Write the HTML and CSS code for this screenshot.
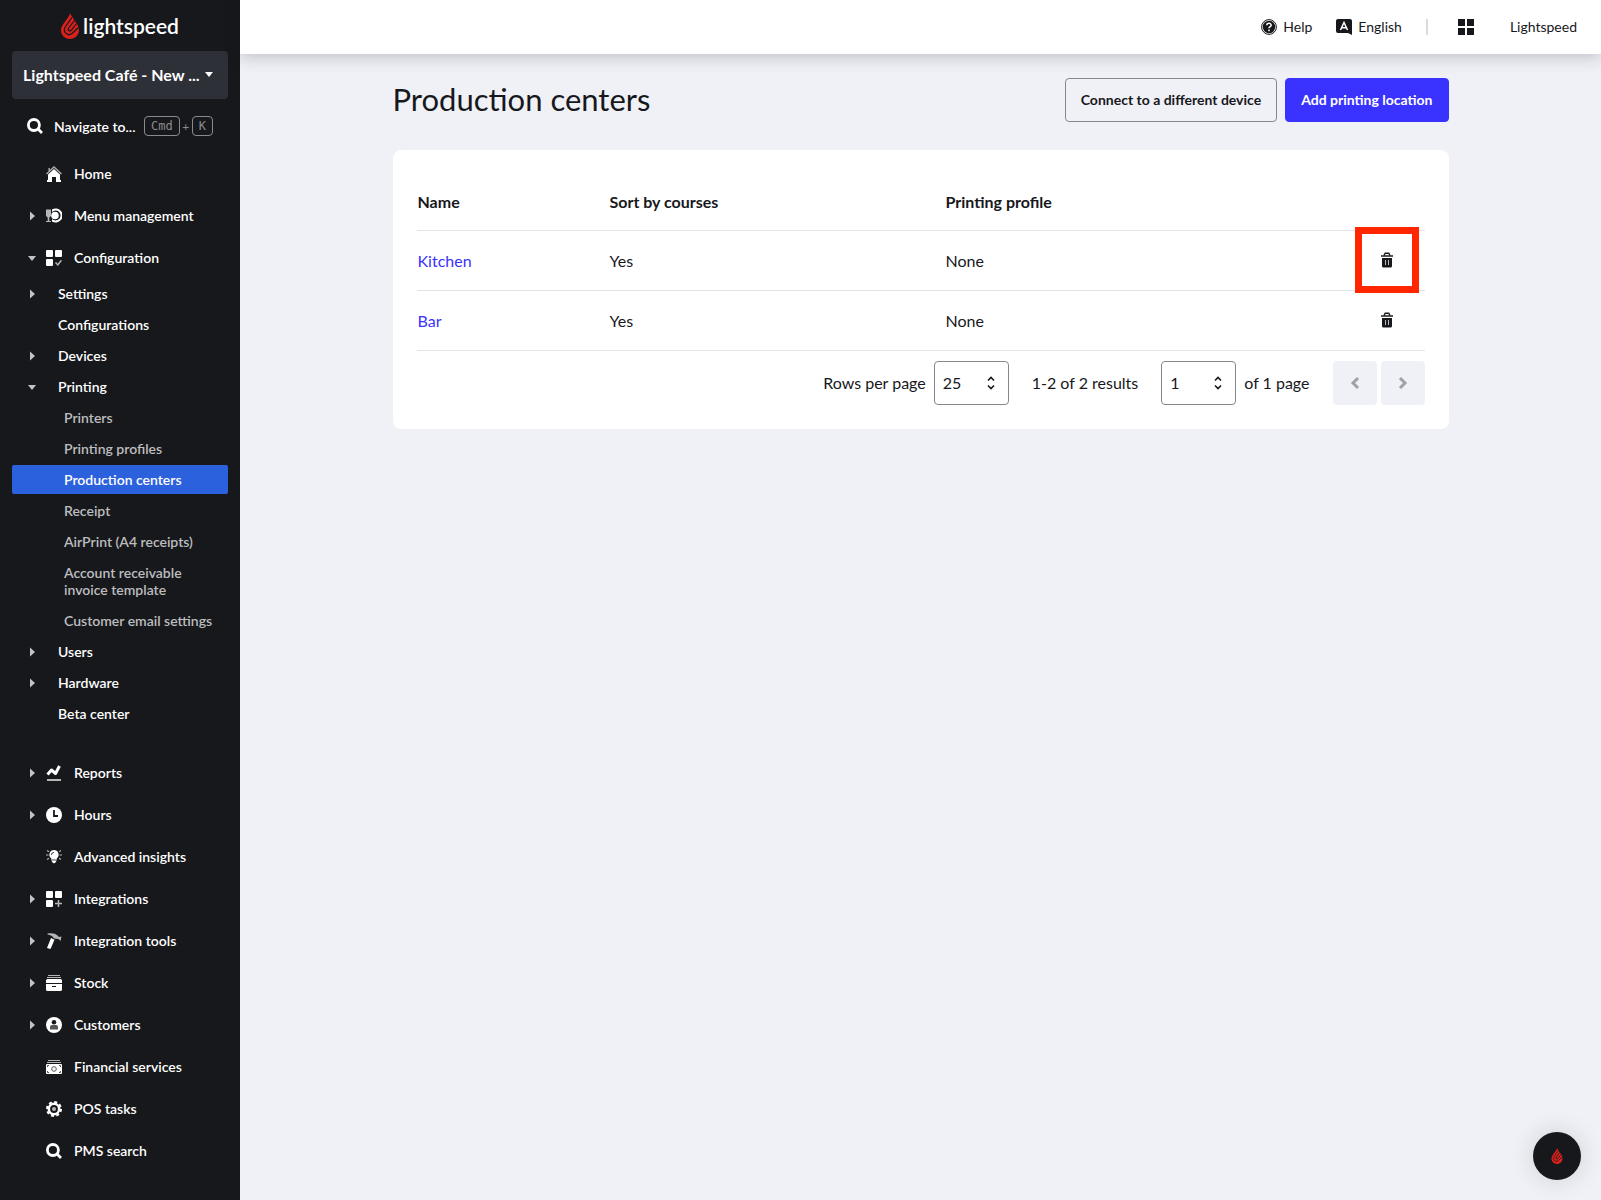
FILE: index.html
```html
<!DOCTYPE html>
<html lang="en">
<head>
    <meta charset="UTF-8">
    <meta name="viewport" content="width=device-width, initial-scale=1.0">
    <title>Production centers</title>
    <link rel="stylesheet" href="styles.css">
</head>
<body>
    <!-- shared shapes -->
    <svg class="defs" aria-hidden="true">
        <symbol id="right" viewBox="0 0 12 12"><path d="M4 1.500v9L9 6z"/></symbol>
        <symbol id="down" viewBox="0 0 12 12"><path d="M2 4h8L6 9z"/></symbol>
        <symbol id="flame" viewBox="0 0 18 26">
            <path fill="#d8211d" d="M9.500 0C9.500 3 12.500 4.500 13 7C15.500 10 18 13 18 17C18 22 14 26 9 26C4 26 0 22 0 17.500C0 13 3.500 9.500 6 6C7.500 4 8.500 2 9.500 0z"/>
            <path fill="none" stroke="#17181c" stroke-width="1.200" d="M11 4.500L4.500 13.500C1 18.500 6.500 24 11 20.500L17.500 14.500M13.500 7.500L8 14.500C6 17.500 8.500 19 10.500 17L15.500 10.500"/>
        </symbol>
        <symbol id="search" viewBox="0 0 16 16"><path fill="none" stroke="currentColor" stroke-width="2.800" d="M12.400 7a5.500 5.500 0 1 1-11 0a5.500 5.500 0 0 1 11 0zM10.800 10.800L15 15"/></symbol>
        <symbol id="trash" viewBox="0 0 12 16">
            <path d="M1 6h10v8a1.500 1.500 0 0 1-1.500 1.500h-7A1.500 1.500 0 0 1 1 14z"/>
            <path fill="#555" d="M0 3h12v2H0z"/>
            <path fill="none" stroke="currentColor" stroke-width="1.400" d="M3 3.500L4.200 1.200h3.600L9 3.500"/>
            <path fill="#bbb" d="M4 8h1v5H4zM7 8h1v5H7z"/>
        </symbol>
        <symbol id="updown" viewBox="0 0 10 14"><path fill="none" stroke="currentColor" stroke-width="1.600" d="M2 4.500l3-3l3 3M2 9.500l3 3l3-3"/></symbol>
    </svg>

    <div class="app">
        <aside class="sidebar">
            <a class="logo" href="#"><svg class="flame"><use href="#flame"/></svg>lightspeed</a>
            <button class="store" type="button"><span>Lightspeed Café - New ...</span><svg class="arrow"><use href="#down"/></svg></button>
            <button class="navigate" type="button">
                <svg class="icon"><use href="#search"/></svg>
                <span class="navigate-text">Navigate to...</span>
                <kbd>Cmd</kbd><span class="plus">+</span><kbd>K</kbd>
            </button>

            <nav>
                <a class="item" href="#">
                    <span class="arrow"></span>
                    <svg class="icon" viewBox="0 0 16 16"><path fill="none" stroke="#aaa" stroke-width="1.500" d="M.5 8L8 1l7.500 7M3.200 5V2"/><path d="M8 3l6 5.500V14h1v2h-5v-5H6v5H1v-2h1V8.500z"/></svg>
                    Home
                </a>
                <a class="item" href="#">
                    <svg class="arrow"><use href="#right"/></svg>
                    <svg class="icon" viewBox="0 0 16 16"><path fill="#b5b5b5" d="M0 1.500h5V8L3.300 9.500v3.500H5v1H0v-1h1.700V9.500L0 8z"/><path d="M6 1.500A7 7 0 1 1 6 13.500V11a5 5 0 1 0 0-7z"/><circle cx="9" cy="7.500" r="3.800"/></svg>
                    Menu management
                </a>
                <a class="item" href="#">
                    <svg class="arrow"><use href="#down"/></svg>
                    <svg class="icon" viewBox="0 0 16 16"><rect width="7" height="7" rx="1"/><rect x="9" width="7" height="7" rx="1"/><rect y="9" width="7" height="7" rx="1"/><path fill="none" stroke="#b5b5b5" stroke-width="1.500" d="M9.500 12.500l2.300 2.300l3.700-4.500"/></svg>
                    Configuration
                </a>

                <div class="submenu">
                    <a class="sub" href="#"><svg class="arrow"><use href="#right"/></svg>Settings</a>
                    <a class="sub" href="#"><span class="arrow"></span>Configurations</a>
                    <a class="sub" href="#"><svg class="arrow"><use href="#right"/></svg>Devices</a>
                    <a class="sub" href="#"><svg class="arrow"><use href="#down"/></svg>Printing</a>
                    <a class="leaf" href="#">Printers</a>
                    <a class="leaf" href="#">Printing profiles</a>
                    <a class="leaf active" href="#">Production centers</a>
                    <a class="leaf" href="#">Receipt</a>
                    <a class="leaf" href="#">AirPrint (A4 receipts)</a>
                    <a class="leaf" href="#">Account receivable<br>invoice template</a>
                    <a class="leaf" href="#">Customer email settings</a>
                    <a class="sub" href="#"><svg class="arrow"><use href="#right"/></svg>Users</a>
                    <a class="sub" href="#"><svg class="arrow"><use href="#right"/></svg>Hardware</a>
                    <a class="sub" href="#"><span class="arrow"></span>Beta center</a>
                </div>

                <a class="item" href="#">
                    <svg class="arrow"><use href="#right"/></svg>
                    <svg class="icon" viewBox="0 0 16 16"><path fill="#b5b5b5" d="M1 14h14v2H1z"/><path fill="none" stroke="currentColor" stroke-width="3" stroke-linejoin="round" d="M1.500 9.500L5.500 5l4 3.500L13.500 1"/></svg>
                    Reports
                </a>
                <a class="item" href="#">
                    <svg class="arrow"><use href="#right"/></svg>
                    <svg class="icon" viewBox="0 0 16 16"><circle cx="8" cy="8" r="8"/><path fill="none" stroke="#17181c" stroke-width="1.800" d="M8 3v6h4"/></svg>
                    Hours
                </a>
                <a class="item" href="#">
                    <span class="arrow"></span>
                    <svg class="icon" viewBox="0 0 16 16"><path fill="none" stroke="#b5b5b5" stroke-width="1.200" d="M0 6h2.500M16 6h-2.500M1 1.500l2 1.200M15 1.500l-2 1.200M1 10.500l2-1.200M15 10.500l-2-1.200"/><path d="M8 1a4.700 4.700 0 0 1 2.800 8.400L10 13l-2 1.500L6 13l-.8-3.600A4.700 4.700 0 0 1 8 1z"/><path fill="none" stroke="#17181c" stroke-width=".8" d="M5.500 6A2.500 2.500 0 0 1 8 3.300M6 11h4"/></svg>
                    Advanced insights
                </a>
                <a class="item" href="#">
                    <svg class="arrow"><use href="#right"/></svg>
                    <svg class="icon" viewBox="0 0 16 16"><rect width="7" height="7" rx="1"/><rect x="9" width="7" height="7" rx="1"/><rect y="9" width="7" height="7" rx="1"/><path fill="none" stroke="#b5b5b5" stroke-width="1.500" d="M9 12.500h7M12.500 9v7"/></svg>
                    Integrations
                </a>
                <a class="item" href="#">
                    <svg class="arrow"><use href="#right"/></svg>
                    <svg class="icon" viewBox="0 0 16 16"><path fill="#b5b5b5" d="M1.500.5C6-.3 9 .2 11.500 2.500L13 4l2.500-.5L14.500 8l-2-2L8 5.500C7 3 4.500 2 1.500 1.500z"/><path d="M5 5l3.500 1.700L4.500 16L1 15z"/></svg>
                    Integration tools
                </a>
                <a class="item" href="#">
                    <svg class="arrow"><use href="#right"/></svg>
                    <svg class="icon" viewBox="0 0 16 16"><path fill="#b5b5b5" d="M2 0h12v1H2zM1 2h14v1H1z"/><path d="M0 5.500Q0 4 1.500 4h13Q16 4 16 5.500V8H0zM0 9h16v5.500q0 1.500-1.500 1.500h-13Q0 16 0 14.500z"/><path fill="#17181c" d="M6 11h4v1H6z"/></svg>
                    Stock
                </a>
                <a class="item" href="#">
                    <svg class="arrow"><use href="#right"/></svg>
                    <svg class="icon" viewBox="0 0 16 16"><circle cx="8" cy="8" r="8"/><circle cx="8" cy="5.300" r="2.300" fill="#17181c"/><path fill="#555" d="M4 12.500V10q0-2 2-2h4q2 0 2 2v2.500z"/></svg>
                    Customers
                </a>
                <a class="item" href="#">
                    <span class="arrow"></span>
                    <svg class="icon" viewBox="0 0 16 16"><path fill="#b5b5b5" d="M2 1h12v1H2zM1 3h14v1H1z"/><rect y="5" width="16" height="10" rx="1"/><g fill="none" stroke="#555"><circle cx="8" cy="10" r="2.300"/><path d="M1.500 8V6.500H3M13 6.500h1.500V8M1.500 12v1.500H3M13 13.500h1.500V12"/></g></svg>
                    Financial services
                </a>
                <a class="item" href="#">
                    <span class="arrow"></span>
                    <svg class="icon" viewBox="0 0 16 16"><circle cx="8" cy="8" r="5.200" fill="none" stroke="currentColor" stroke-width="2.600"/><circle cx="8" cy="8" r="7" fill="none" stroke="currentColor" stroke-width="2" stroke-dasharray="3 2.500"/><circle cx="8" cy="8" r="2" fill="#b5b5b5"/></svg>
                    POS tasks
                </a>
                <a class="item" href="#">
                    <span class="arrow"></span>
                    <svg class="icon"><use href="#search"/></svg>
                    PMS search
                </a>
            </nav>
        </aside>

        <div class="content">
            <header class="topbar">
                <a class="toplink" href="#">
                    <svg class="icon" viewBox="0 0 16 16"><circle cx="8" cy="8" r="7.400" fill="none" stroke="currentColor"/><circle cx="8" cy="8" r="6.200"/><path fill="none" stroke="#fff" stroke-width="1.500" d="M5.800 6.300C5.800 3.600 10.200 3.600 10.200 6.200C10.200 7.700 8 7.500 8 9.300M8 10.500v1.700"/></svg>
                    Help
                </a>
                <a class="toplink" href="#">
                    <svg class="icon" viewBox="0 0 16 16"><path d="M2 0h12q2 0 2 2v14l-4-2H2q-2 0-2-2V2q0-2 2-2z"/><path fill="none" stroke="#fff" stroke-width="1.500" d="M4.500 11L8 3.500l3.500 7.500M5.800 8.800h4.400"/></svg>
                    English
                </a>
                <span class="divider"></span>
                <button class="apps" type="button" aria-label="Apps"><svg class="icon" viewBox="0 0 16 16"><path d="M0 0h7v7H0zM9 0h7v7H9zM0 9h7v7H0zM9 9h7v7H9z"/></svg></button>
                <a class="toplink" href="#">Lightspeed</a>
            </header>

            <main>
                <div class="heading">
                    <h1>Production centers</h1>
                    <div class="actions">
                        <button class="btn" type="button">Connect to a different device</button>
                        <button class="btn primary" type="button">Add printing location</button>
                    </div>
                </div>

                <section class="card">
                    <table>
                        <thead>
                            <tr><th class="name">Name</th><th class="sort">Sort by courses</th><th class="profile">Printing profile</th><th class="delete"></th></tr>
                        </thead>
                        <tbody>
                            <tr>
                                <td><a href="#">Kitchen</a></td><td>Yes</td><td>None</td>
                                <td class="delete"><button class="remove marked" type="button" aria-label="Delete Kitchen"><svg><use href="#trash"/></svg></button></td>
                            </tr>
                            <tr>
                                <td><a href="#">Bar</a></td><td>Yes</td><td>None</td>
                                <td class="delete"><button class="remove" type="button" aria-label="Delete Bar"><svg><use href="#trash"/></svg></button></td>
                            </tr>
                        </tbody>
                    </table>
                    <div class="pagination">
                        <label for="rows">Rows per page</label>
                        <span class="select"><select id="rows"><option>25</option></select><svg><use href="#updown"/></svg></span>
                        <span class="results">1-2 of 2 results</span>
                        <span class="select"><select id="page" aria-label="Page"><option>1</option></select><svg><use href="#updown"/></svg></span>
                        <label for="page">of 1 page</label>
                        <div class="pager">
                            <button type="button" aria-label="Previous page" disabled><svg viewBox="0 0 12 16"><path d="M9 3L4 8l5 5"/></svg></button>
                            <button type="button" aria-label="Next page" disabled><svg viewBox="0 0 12 16"><path d="M3 3l5 5l-5 5"/></svg></button>
                        </div>
                    </div>
                </section>
            </main>
        </div>
    </div>

    <button class="support" type="button" aria-label="Support"><svg><use href="#flame"/></svg></button>
</body>
</html>
```
FILE: styles.css
```css
* {
    box-sizing: border-box;
}
body {
    margin: 0;
    font-family: Lato, sans-serif;
    font-size: 16px;
    color: #17181c;
    background-color: #f0f1f7;
}
a {
    text-decoration: none;
    color: inherit;
}
button, select {
    font-family: inherit;
    color: inherit;
    cursor: pointer;
}
svg {
    display: block;
    fill: currentColor;
}
.defs {
    position: absolute;
    width: 0;
    height: 0;
}
.app {
    display: flex;
    min-height: 100vh;
}

/* sidebar */
.sidebar {
    flex: 0 0 240px;
    padding: 0 12px;
    background-color: #17181c;
    color: #fff;
}
.logo {
    display: flex;
    align-items: center;
    justify-content: center;
    gap: 4px;
    height: 51px;
    font-size: 21px;
    font-weight: 600;
}
.flame {
    width: 18px;
    height: 26px;
}
.store {
    display: flex;
    align-items: center;
    justify-content: space-between;
    width: 100%;
    height: 48px;
    padding: 0 13px 2px 11px;
    border: none;
    border-radius: 4px;
    background-color: #2e3038;
    font-size: 16px;
    font-weight: bold;
}
.navigate {
    display: flex;
    align-items: center;
    width: 100%;
    height: 54px;
    padding: 0 15px;
    border: none;
    background: none;
    font-size: 14px;
    font-weight: 600;
    white-space: nowrap;
}
.navigate-text {
    flex: 1;
    margin-left: 11px;
    text-align: left;
}
kbd {
    padding: 0 6px;
    border: 1px solid #8a8b8e;
    border-radius: 4px;
    font-family: "DejaVu Sans Mono", monospace;
    font-size: 12px;
    font-weight: normal;
    line-height: 18px;
    color: #8a8b8e;
}
.plus {
    width: 12px;
    font-size: 12px;
    font-weight: normal;
    text-align: center;
    color: #8a8b8e;
}
.icon {
    flex: none;
    width: 16px;
    height: 16px;
}
.arrow {
    flex: none;
    width: 12px;
    height: 12px;
}
nav {
    font-size: 14px;
    font-weight: 600;
    line-height: 17px;
}
nav .arrow {
    color: #c4c4c6;
}
.item, .sub {
    display: flex;
    align-items: center;
    padding-left: 14px;
}
.item {
    height: 42px;
    padding-bottom: 1px;
}
.item .icon {
    margin: 0 12px 0 8px;
}
.submenu {
    margin-bottom: 24px;
}
.sub, .leaf {
    padding-top: 6px;
    padding-bottom: 6px;
    margin-bottom: 2px;
}
.sub {
    gap: 20px;
}
.leaf {
    display: block;
    padding-left: 52px;
    border-radius: 2px;
    color: #bdbdbf;
}
.active {
    background-color: #2c61de;
    color: #fff;
}

/* top bar */
.content {
    flex: 1;
}
.topbar {
    display: flex;
    align-items: center;
    justify-content: flex-end;
    height: 54px;
    padding: 0 24px 1px;
    background-color: #fff;
    box-shadow: 0 2px 16px rgba(23, 24, 28, 0.25);
    font-size: 14px;
}
.toplink {
    display: flex;
    align-items: center;
    gap: 6px;
    margin-left: 24px;
}
.divider {
    width: 2px;
    height: 16px;
    margin: 0 6px 0 24px;
    background-color: #dadbe0;
}
.apps {
    margin: 0 12px 0 24px;
    padding: 0;
    border: none;
    background: none;
}

/* page */
main {
    max-width: 1104px;
    margin: 0 auto;
    padding: 24px;
}
.heading {
    display: flex;
    align-items: center;
    justify-content: space-between;
    margin-bottom: 28px;
}
h1 {
    margin: 0;
    padding-bottom: 2px;
    font-size: 31px;
    font-weight: normal;
    line-height: 40px;
}
.actions {
    display: flex;
    gap: 8px;
}
.btn {
    height: 44px;
    padding: 0 15px 2px;
    border: 1px solid #86878b;
    border-radius: 4px;
    background: none;
    font-size: 14px;
    font-weight: bold;
}
.primary {
    border-color: #3a32ff;
    background-color: #3a32ff;
    color: #fff;
}
.card {
    padding: 24px;
    border-radius: 8px;
    background-color: #fff;
}
table {
    width: 100%;
    border-collapse: collapse;
    table-layout: fixed;
}
th, td {
    height: 60px;
    padding: 0 0 0 1px;
    border-bottom: 1px solid #e2e3e9;
    text-align: left;
}
th {
    height: 56px;
    font-weight: bold;
}
.name {
    width: 192px;
}
.sort {
    width: 336px;
}
.delete {
    width: 76px;
    padding: 0;
}
td a {
    color: #3a32ff;
}
.remove {
    position: relative;
    display: block;
    margin: 0 auto;
    padding: 8px;
    border: none;
    background: none;
}
.remove svg {
    width: 12px;
    height: 16px;
}
.marked::after {
    content: "";
    position: absolute;
    inset: -17px -18px;
    border: 7px solid #ff2600;
}
.pagination {
    display: flex;
    align-items: center;
    justify-content: flex-end;
    gap: 8px;
    margin-top: 10px;
}
.results {
    margin: 0 15px;
}
.select {
    position: relative;
}
.select select {
    display: block;
    width: 75px;
    height: 44px;
    padding: 0 8px;
    border: 1px solid #86878b;
    border-radius: 4px;
    background-color: #fff;
    font-size: 16px;
    appearance: none;
}
.select svg {
    position: absolute;
    top: 15px;
    right: 13px;
    width: 10px;
    height: 14px;
    pointer-events: none;
}
.pager {
    display: flex;
    gap: 4px;
    margin-left: 15px;
}
.pager button {
    display: flex;
    align-items: center;
    justify-content: center;
    width: 44px;
    height: 44px;
    border: none;
    border-radius: 4px;
    background-color: #f0f1f7;
    color: #a0a1a5;
}
.pager svg {
    width: 12px;
    height: 16px;
    fill: none;
    stroke: currentColor;
    stroke-width: 3;
}
.support {
    position: fixed;
    right: 20px;
    bottom: 20px;
    display: flex;
    align-items: center;
    justify-content: center;
    width: 48px;
    height: 48px;
    padding: 0;
    border: none;
    border-radius: 50%;
    background-color: #17181c;
    box-shadow: 0 0 24px rgba(23, 24, 28, 0.15);
}
.support svg {
    width: 12px;
    height: 16px;
}
```
